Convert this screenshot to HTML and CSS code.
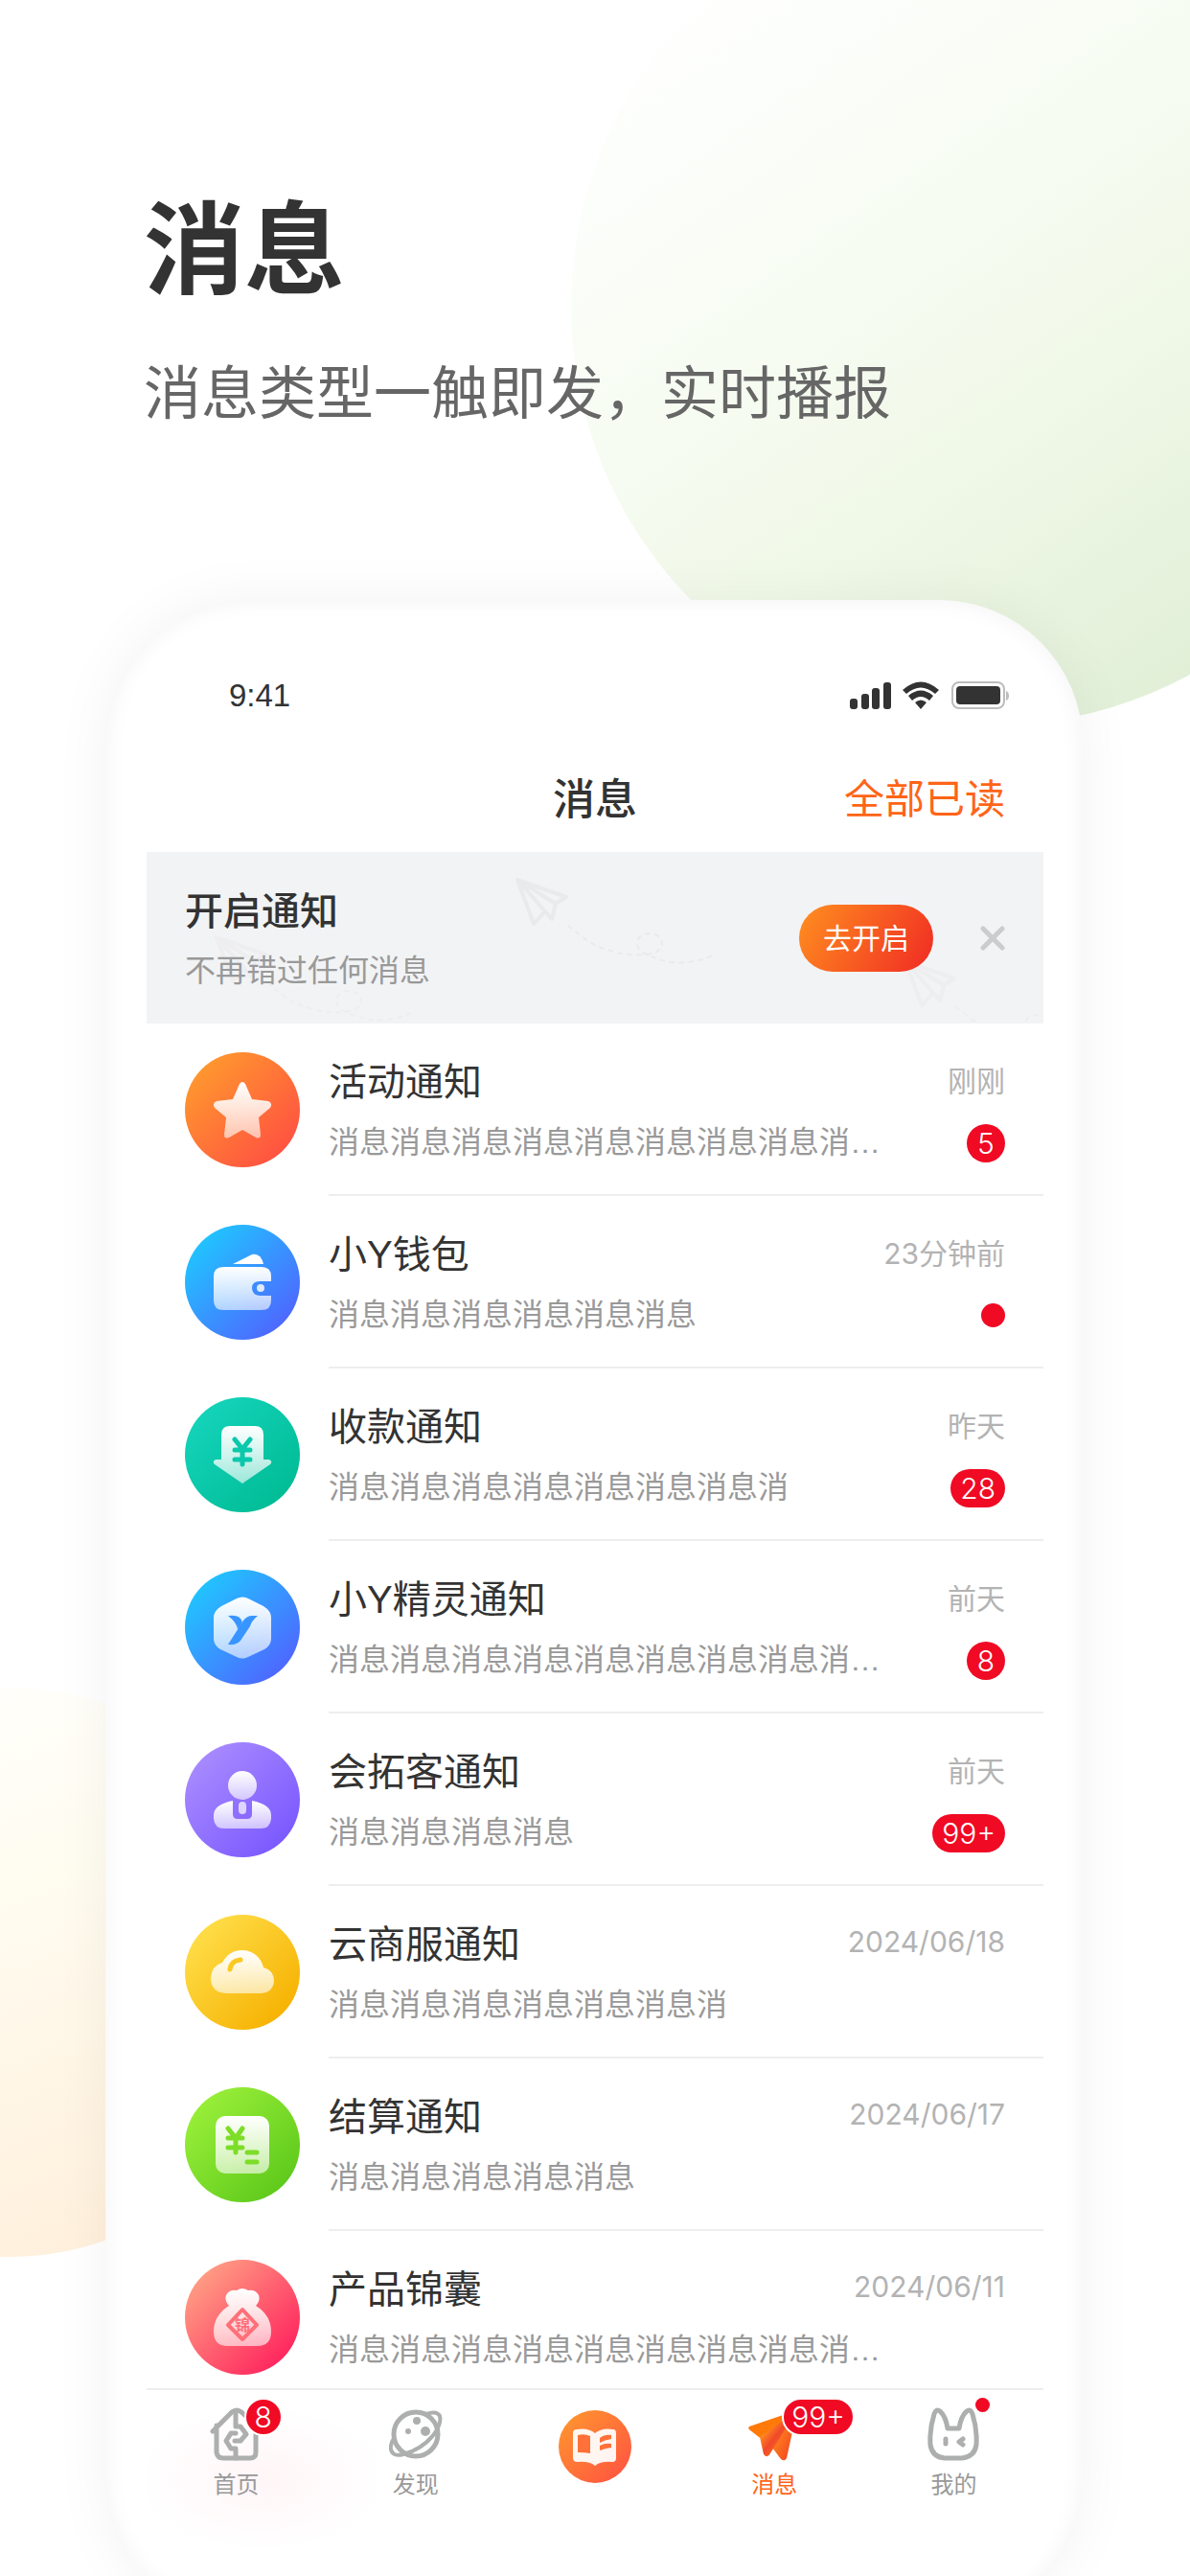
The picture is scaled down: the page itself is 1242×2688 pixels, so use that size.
FILE: index.html
```html
<!DOCTYPE html>
<html lang="zh-CN">
<head>
  <meta charset="UTF-8">
  <meta name="viewport" content="width=device-width, initial-scale=1.0">
  <title>消息</title>
  <link rel="stylesheet" href="styles.css">
</head>
<body>
  <div class="backdrop">
    <div class="circle circle-green"></div>
    <div class="circle circle-orange"></div>
  </div>

  <header class="intro">
    <h1>消息</h1>
    <p>消息类型一触即发，实时播报</p>
  </header>

  <main class="phone">
    <div class="status-bar">
      <span>9:41</span>
      <svg width="168" height="30" viewBox="0 0 168 30">
        <g fill="#333">
          <rect x="0" y="18" width="8" height="11" rx="3"/>
          <rect x="12" y="13" width="8" height="16" rx="3"/>
          <rect x="23" y="7" width="8" height="22" rx="3"/>
          <rect x="35" y="1" width="8" height="28" rx="3"/>
          <path d="M55 9 Q74 -8 93 9 L89 13 Q74 0 59 13 Z"/>
          <path d="M61 15 Q74 4 87 15 L83 20 Q74 12 65 20 Z"/>
          <path d="M68 22 Q74 17 80 22 L74 29 Z"/>
          <rect x="111" y="5" width="46" height="19" rx="4"/>
        </g>
        <rect x="107" y="1" width="54" height="27" rx="7" fill="none" stroke="#bdbdbd" stroke-width="2"/>
        <path d="M163 10 q3 1 3 5 t-3 5z" fill="#bdbdbd"/>
      </svg>
    </div>

    <div class="nav-bar">
      <h2>消息</h2>
      <button class="read-all" type="button">全部已读</button>
    </div>

    <section class="banner">
      <svg class="banner-art" viewBox="0 0 936 179">
        <defs>
          <g id="trail" fill="none" stroke="#e9eaeb" stroke-width="4" stroke-linejoin="round" stroke-linecap="round">
            <path d="M2 2 L53 20 L42 27 L38 43 L31 35 L19 48 Z M2 2 L42 27 M2 2 L31 35"/>
            <path d="M55 50 C68 60 78 70 96 75 Q116 82 136 80 Q152 78 153 69 Q152 58 139 58 Q128 59 127 68 Q128 78 138 80 Q170 97 208 80" stroke-width="2" stroke-dasharray="4 6"/>
          </g>
        </defs>
        <use href="#trail" x="385" y="27"/>
        <use href="#trail" x="71" y="87" opacity=".5"/>
        <use href="#trail" x="790" y="112" opacity=".5"/>
      </svg>
      <div class="banner-text">
        <h3>开启通知</h3>
        <p>不再错过任何消息</p>
      </div>
      <button class="open-button" type="button">去开启</button>
      <button class="close-button" type="button" aria-label="关闭">
        <svg width="26" height="26" viewBox="0 0 26 26"><path d="M3 3 23 23 M23 3 3 23" stroke="#ccc" stroke-width="5" stroke-linecap="round"/></svg>
      </button>
    </section>

    <svg class="defs" width="0" height="0">
      <defs>
        <linearGradient id="white" x1="0" y1="0" x2="0" y2="1">
          <stop offset="0" stop-color="#fff"/>
          <stop offset="1" stop-color="#fff" stop-opacity=".6"/>
        </linearGradient>
        <linearGradient id="orange" x1="0" y1="0" x2="1" y2="1">
          <stop offset="0" stop-color="#ff9a2e"/>
          <stop offset="1" stop-color="#ff4f42"/>
        </linearGradient>
      </defs>
    </svg>

    <ul class="message-list">
      <li class="message">
        <svg class="avatar star" viewBox="0 0 120 120">
          <path d="M57 33 Q60 29 63 33 L70 49 L87 51 Q92 53 89 58 L77 68 L79 86 Q79 91 74 89 L60 81 L46 89 Q41 91 41 86 L43 68 L31 58 Q28 53 33 51 L50 49 Z" fill="url(#white)"/>
        </svg>
        <div class="message-body">
          <div class="message-row"><h3>活动通知</h3><time>刚刚</time></div>
          <div class="message-row"><p>消息消息消息消息消息消息消息消息消…</p><span class="badge">5</span></div>
        </div>
      </li>
      <li class="message">
        <svg class="avatar blue" viewBox="0 0 120 120">
          <path d="M50 41 L70 31 Q79 29 82 41 Z" fill="#fff"/>
          <path d="M40 44 H80 Q90 44 90 54 V59 H78 Q70 59 70 66 T78 74 H90 V79 Q90 89 80 89 H40 Q30 89 30 79 V54 Q30 44 40 44 Z" fill="url(#white)"/>
          <circle cx="79" cy="66" r="4" fill="#e0eaff"/>
        </svg>
        <div class="message-body">
          <div class="message-row"><h3>小Y钱包</h3><time>23分钟前</time></div>
          <div class="message-row"><p>消息消息消息消息消息消息</p><span class="dot"></span></div>
        </div>
      </li>
      <li class="message">
        <svg class="avatar teal" viewBox="0 0 120 120">
          <path d="M47 30 H73 Q82 30 82 39 V65 H88 Q92 67 89 70 L60 90 L31 70 Q28 67 32 65 H38 V39 Q38 30 47 30 Z" fill="url(#white)"/>
          <path d="M52 44 L60 54 L68 44 M52 55 H68 M52 65 H68 M60 55 V70" fill="none" stroke="#0ac8ab" stroke-width="5" stroke-linecap="round"/>
        </svg>
        <div class="message-body">
          <div class="message-row"><h3>收款通知</h3><time>昨天</time></div>
          <div class="message-row"><p>消息消息消息消息消息消息消息消</p><span class="badge">28</span></div>
        </div>
      </li>
      <li class="message">
        <svg class="avatar blue" viewBox="0 0 120 120">
          <path d="M54 30 Q60 27 66 30 L82 38 Q90 43 90 50 V72 Q90 79 83 83 L66 91 Q60 94 54 91 L37 83 Q30 79 30 72 V50 Q30 43 38 38 Z" fill="url(#white)"/>
          <path d="M45 48 Q58 46 60 55 L55 62 Q54 55 45 48 Z M76 48 H70 Q65 48 61 53 L45 78 Q54 79 58 74 L68 59 Q69 54 76 48 Z" fill="#3895ff"/>
        </svg>
        <div class="message-body">
          <div class="message-row"><h3>小Y精灵通知</h3><time>前天</time></div>
          <div class="message-row"><p>消息消息消息消息消息消息消息消息消…</p><span class="badge">8</span></div>
        </div>
      </li>
      <li class="message">
        <svg class="avatar purple" viewBox="0 0 120 120">
          <circle cx="60" cy="45" r="15" fill="url(#white)"/>
          <path d="M50 61 V75 Q50 80 55 80 H65 Q70 80 70 75 V61 Q90 65 90 76 V80 Q89 90 79 90 H41 Q31 90 30 80 V76 Q30 65 50 61 Z" fill="url(#white)"/>
          <rect x="56" y="62" width="8" height="13" rx="4" fill="#ddd5ff"/>
        </svg>
        <div class="message-body">
          <div class="message-row"><h3>会拓客通知</h3><time>前天</time></div>
          <div class="message-row"><p>消息消息消息消息</p><span class="badge">99+</span></div>
        </div>
      </li>
      <li class="message">
        <svg class="avatar yellow" viewBox="0 0 120 120">
          <path d="M43 82 Q27 81 27 66 Q28 53 39 50 Q46 37 60 37 Q77 38 82 55 Q93 58 93 69 Q92 81 80 82 Z" fill="url(#white)"/>
          <path d="M47 57 Q48 48 58 47" fill="none" stroke="#fac922" stroke-width="5" stroke-linecap="round"/>
        </svg>
        <div class="message-body">
          <div class="message-row"><h3>云商服通知</h3><time>2024/06/18</time></div>
          <div class="message-row"><p>消息消息消息消息消息消息消</p></div>
        </div>
      </li>
      <li class="message">
        <svg class="avatar green" viewBox="0 0 120 120">
          <rect x="32" y="30" width="56" height="60" rx="10" fill="url(#white)"/>
          <path d="M45 43 L53 53 L60 43 M45 53 H60 M45 63 H60 M53 54 V68 M65 68 H75 M65 78 H75" fill="none" stroke="#7ddd28" stroke-width="5" stroke-linecap="round"/>
        </svg>
        <div class="message-body">
          <div class="message-row"><h3>结算通知</h3><time>2024/06/17</time></div>
          <div class="message-row"><p>消息消息消息消息消息</p></div>
        </div>
      </li>
      <li class="message">
        <svg class="avatar red" viewBox="0 0 120 120">
          <path d="M46 48 Q41 43 43 37 Q46 31 54 32 Q60 28 66 32 Q74 31 77 37 Q79 43 74 48 Q90 58 90 75 Q90 89 77 90 H43 Q30 89 30 75 Q30 58 46 48 Z" fill="url(#white)"/>
          <path d="M60 52 L75 68 L60 83 L45 68 Z" fill="none" stroke="#ff6f78" stroke-width="4" stroke-linejoin="round"/>
          <text x="60" y="74" text-anchor="middle" class="avatar-text">锦</text>
        </svg>
        <div class="message-body">
          <div class="message-row"><h3>产品锦囊</h3><time>2024/06/11</time></div>
          <div class="message-row"><p>消息消息消息消息消息消息消息消息消…</p></div>
        </div>
      </li>
    </ul>

    <nav class="tab-bar">
      <a class="tab" href="#home">
        <span class="tab-icon">
          <svg width="56" height="56" viewBox="0 0 56 56" fill="none" stroke="#acafae" stroke-width="5" stroke-linecap="round" stroke-linejoin="round">
            <path d="M7 19 V47 Q8 53 14 53 H42 Q48 53 48 47 V19 M3 25 L23 5 Q28 1 33 5 L46 17"/>
            <path d="M27 4 V20 H32 L38 28 L32 35 H26 M27 53 V43 H22 L17 35 L22 27 H27"/>
          </svg>
          <span class="badge tab-badge">8</span>
        </span>
        首页
      </a>
      <a class="tab" href="#discover">
        <span class="tab-icon">
          <svg width="56" height="56" viewBox="0 0 56 56" fill="none" stroke="#acafae" stroke-width="5">
            <circle cx="28" cy="28" r="23"/>
            <path d="M39 7 Q50 3 53 9 Q55 17 47 28 Q34 44 15 49 Q4 52 2 44 Q1 38 6 31" stroke-width="4"/>
            <path d="M16 49 Q38 44 51 24" stroke-width="2"/>
            <g fill="#acafae" stroke="none"><circle cx="29" cy="14" r="4"/><circle cx="38" cy="25" r="5"/><circle cx="20" cy="25" r="3"/></g>
          </svg>
        </span>
        发现
      </a>
      <a class="tab" href="#book" aria-label="资讯">
        <svg class="tab-book" width="76" height="76" viewBox="0 0 76 76">
          <circle cx="38" cy="38" r="38" fill="url(#orange)"/>
          <path d="M19 20 Q31 18 38 24 Q45 18 57 20 Q60 20 60 24 V50 Q60 54 56 54 Q44 53 38 58 Q32 53 20 54 Q15 54 15 50 V24 Q15 20 19 20 Z" fill="#fff" fill-opacity=".93"/>
          <path d="M20 26 Q27 24 33 27 V45 Q27 44 20 44 Z M43 29 Q48 25 55 26 V30 Q48 31 43 34 Z M43 37 Q48 34 55 35 V39 Q48 40 43 42 Z" fill="#ff7138"/>
        </svg>
      </a>
      <a class="tab active" href="#messages">
        <span class="tab-icon">
          <svg width="56" height="56" viewBox="0 0 56 56">
            <defs>
              <linearGradient id="plane" x1="0" y1="0" x2="1" y2="1"><stop offset=".3" stop-color="#ff861c"/><stop offset="1" stop-color="#f03024"/></linearGradient>
              <linearGradient id="fold" x1="0" y1="0" x2="1" y2="1"><stop offset=".3" stop-color="#ff8a20"/><stop offset=".5" stop-color="#f0482a"/><stop offset=".8" stop-color="#ff861c"/></linearGradient>
            </defs>
            <path d="M2 20 L52 3 L16 34 L3 24 Q0 22 2 20 Z" fill="#ff7a08"/>
            <path d="M26 42 L52 3 L41 53 Q39 57 35 54 Z" fill="url(#plane)"/>
            <path d="M13 31 L52 3 L24 48 Q21 54 17 49 Z" fill="url(#fold)"/>
          </svg>
          <span class="badge tab-badge">99+</span>
        </span>
        消息
      </a>
      <a class="tab" href="#mine">
        <span class="tab-icon">
          <svg width="56" height="56" viewBox="0 0 56 56" fill="none" stroke="#acafae" stroke-width="5" stroke-linecap="round" stroke-linejoin="round">
            <path d="M22 22 H34 Q36 9 42 4 Q46 1 48 7 Q53 23 52 39 Q50 52 37 53 H19 Q6 52 4 39 Q3 23 8 7 Q10 1 14 4 Q20 9 22 22 Z"/>
            <path d="M20 33 V38 M38 33 L34 36 L38 39"/>
          </svg>
          <span class="dot tab-dot"></span>
        </span>
        我的
      </a>
    </nav>
  </main>
</body>
</html>
```
FILE: styles.css
```css
:root {
  --text: #333;
  --muted: #999;
  --light: #b3b3b3;
  --accent: #ff6417;
  --badge: #f00a24;
}

* {
  box-sizing: border-box;
}

html {
  height: 100%;
  overflow: hidden;
}

body {
  margin: 0;
  height: 100%;
  position: relative;
  overflow: hidden;
  background: #fff;
  color: var(--text);
  font-family: "Liberation Sans", "Noto Sans CJK SC", sans-serif;
}

h1, h2, h3, p, ul {
  margin: 0;
  padding: 0;
}

button {
  border: 0;
  padding: 0;
  background: none;
  font-family: inherit;
  cursor: pointer;
}

/* background circles */
.backdrop {
  position: absolute;
  inset: 0;
  overflow: hidden;
}

.circle {
  position: absolute;
  border-radius: 50%;
}

.circle-green {
  top: -117px;
  left: 596px;
  width: 874px;
  height: 874px;
  background: linear-gradient(145deg, #fff 12%, #f6fcf2 42%, #f0f8e7 60%, #dfeed5 90%);
}

.circle-orange {
  top: 1761px;
  left: -287px;
  width: 594px;
  height: 594px;
  background: linear-gradient(160deg, #fff 0%, #fffdf2 35%, #fff0dc 90%);
}

.intro {
  position: relative;
  padding: 184px 150px 0;
}

.intro h1 {
  font-size: 105px;
  line-height: 156px;
  font-weight: 700;
}

.intro p {
  margin-top: 28px;
  color: #666;
  font-size: 60px;
  line-height: 88px;
}

.phone {
  position: relative;
  margin: 170px 112px 0 110px;
  padding: 64px 41px 74px 43px;
  border-radius: 150px;
  background: #fff;
  box-shadow: 0 0 60px rgba(0, 0, 0, 0.05), inset 0 0 24px rgba(0, 0, 0, 0.05);
}

.status-bar {
  display: flex;
  justify-content: space-between;
  align-items: center;
  height: 72px;
  padding: 0 34px 0 86px;
  font-size: 33px;
}

.nav-bar {
  display: grid;
  grid-template-columns: 1fr auto 1fr;
  align-items: center;
  height: 127px;
  padding: 10px 40px 0;
}

.nav-bar h2 {
  grid-column: 2;
  font-size: 44px;
  font-weight: 500;
}

.read-all {
  justify-self: end;
  color: var(--accent);
  font-size: 42px;
}

.banner {
  position: relative;
  display: flex;
  align-items: center;
  height: 179px;
  padding: 0 40px;
  background: #f2f3f5;
}

.banner-art {
  position: absolute;
  inset: 0;
  width: 100%;
  height: 100%;
}

.banner-text {
  position: relative;
  flex: 1;
  padding-top: 8px;
}

.banner-text h3 {
  font-size: 40px;
  line-height: 60px;
  font-weight: 500;
}

.banner-text p {
  color: var(--muted);
  font-size: 32px;
  line-height: 64px;
}

.open-button {
  position: relative;
  width: 140px;
  height: 70px;
  padding-bottom: 4px;
  border-radius: 35px;
  background: linear-gradient(120deg, #ff8f1f, #f02a24);
  color: #fff;
  font-size: 30px;
}

.close-button {
  position: relative;
  display: flex;
  margin-left: 49px;
}

.defs {
  position: absolute;
}

/* messages */
.message-list {
  list-style: none;
}

.message {
  display: flex;
  align-items: center;
  height: 180px;
  padding-left: 40px;
}

.avatar {
  flex: none;
  width: 120px;
  height: 120px;
  margin-right: 30px;
  border-radius: 50%;
}

.star { background: linear-gradient(135deg, #ff9a2e 10%, #ff4f42 90%); }
.blue { background: linear-gradient(135deg, #1fc8ff 10%, #5063ff 90%); }
.teal { background: linear-gradient(135deg, #14d4bb 10%, #00bb94 90%); }
.purple { background: linear-gradient(135deg, #a98cff 10%, #7957ff 90%); }
.yellow { background: linear-gradient(135deg, #ffdf4a 10%, #f6b000 90%); }
.green { background: linear-gradient(135deg, #9bf03a 10%, #5cc81a 90%); }
.red { background: linear-gradient(135deg, #ffa285 10%, #ff205c 90%); }

.avatar-text {
  fill: #ff6f78;
  font-size: 16px;
  font-weight: 700;
}

.message-body {
  flex: 1;
  min-width: 0;
  height: 180px;
  padding: 30px 40px 0 0;
  border-bottom: 2px solid #eee;
}

.message:last-child .message-body {
  border-bottom: 0;
}

.message-row {
  display: flex;
  justify-content: space-between;
  align-items: center;
  height: 63px;
}

.message h3,
.message p,
.message time {
  padding-bottom: 8px;
}

.message h3 {
  font-size: 40px;
  font-weight: 400;
}

.message p {
  color: var(--muted);
  font-size: 32px;
  white-space: nowrap;
}

.message time {
  color: var(--light);
  font-family: Inter, "Noto Sans CJK SC", sans-serif;
  font-size: 30px;
}

.badge {
  min-width: 40px;
  height: 40px;
  padding: 0 10px;
  border-radius: 20px;
  background: var(--badge);
  color: #fff;
  font-family: Inter, "Noto Sans CJK SC", sans-serif;
  font-size: 30px;
  font-weight: 300;
  line-height: 40px;
  text-align: center;
}

.dot {
  width: 25px;
  height: 25px;
  border-radius: 50%;
  background: var(--badge);
}

/* bottom tabs */
.tab-bar {
  position: relative;
  display: grid;
  grid-template-columns: repeat(5, 1fr);
  height: 170px;
  margin-top: -16px;
  border-top: 2px solid #eee;
  background: radial-gradient(ellipse 130px 75px at 120px 92px, #fff5f7, #fff);
}

.tab {
  display: flex;
  flex-direction: column;
  align-items: center;
  padding-top: 18px;
  color: var(--muted);
  font-size: 24px;
  line-height: 50px;
  text-decoration: none;
}

.tab.active {
  color: var(--accent);
}

.tab-book {
  margin-top: 3px;
}

.tab-icon {
  position: relative;
  display: flex;
}

.tab-badge {
  position: absolute;
  top: -10px;
  left: 36px;
  min-width: 40px;
  padding: 0 8px;
  border: 2px solid #fff;
  line-height: 36px;
}

.tab-dot {
  position: absolute;
  top: -10px;
  right: -10px;
  width: 15px;
  height: 15px;
}
```
